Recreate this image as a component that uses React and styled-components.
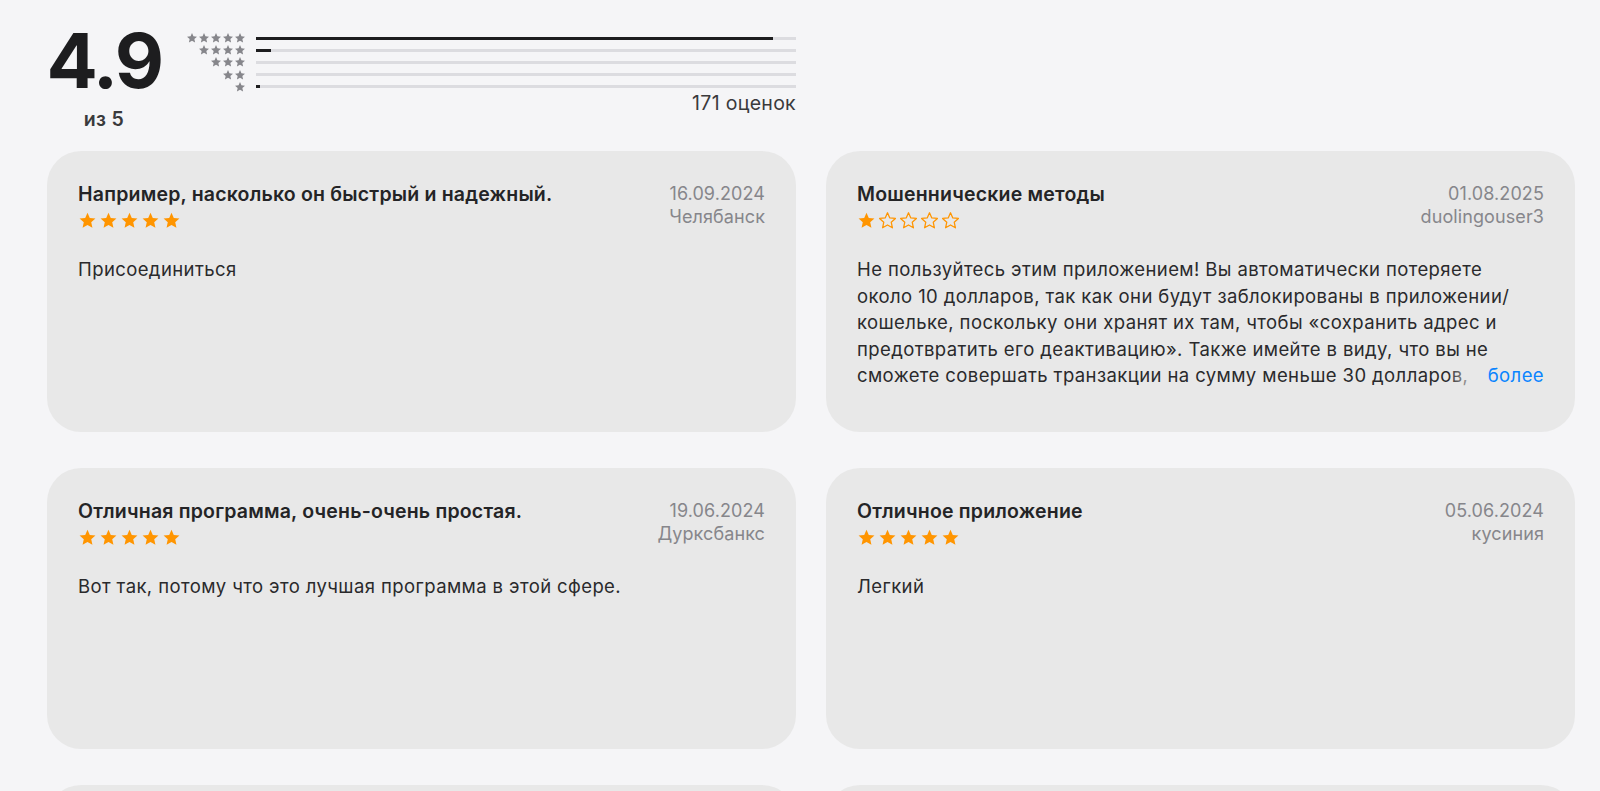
import React from "react";
import styled, { createGlobalStyle } from "styled-components";

const GlobalStyle = createGlobalStyle`
  body {
    margin: 0;
    background: #f5f5f7;
    font-family: Inter, "Noto Sans", "Liberation Sans", sans-serif;
    color: #1d1d1f;
    -webkit-font-smoothing: antialiased;
  }
`;

const Page = styled.div`
  padding: 22px 26px 0 47px;
  overflow: hidden;
  height: 791px;
  box-sizing: border-box;
`;

const Summary = styled.div`
  display: flex;
  align-items: flex-start;
  width: 749px;
`;

const ScoreBox = styled.div`
  display: flex;
  flex-direction: column;
  align-items: center;
  width: 114px;
`;

const Score = styled.div`
  font-size: 76px;
  line-height: 76px;
  font-weight: 700;
  letter-spacing: -2.5px;
  color: #1d1d1f;
`;

const OutOf = styled.div`
  margin-top: 9px;
  font-size: 19.5px;
  font-weight: 600;
  letter-spacing: 0.3px;
  color: #3a3a3c;
`;

const Distribution = styled.div`
  margin-left: 25px;
  margin-top: 10px;
  flex: 1;
  display: flex;
  flex-direction: column;
`;

const DistRow = styled.div`
  display: flex;
  align-items: center;
  height: 12.2px;
`;

const MiniStars = styled.div`
  width: 60px;
  display: flex;
  justify-content: flex-end;
`;

const Track = styled.div`
  margin-left: 10px;
  flex: 1;
  height: 3px;
  background: #dcdce0;
`;

const Fill = styled.div`
  height: 3px;
  background: #1d1d1f;
`;

const Count = styled.div`
  margin-top: -2px;
  text-align: right;
  font-size: 19.5px;
  letter-spacing: 0.3px;
  color: #3a3a3c;
`;

const Grid = styled.div`
  margin-top: 20px;
  display: grid;
  grid-template-columns: 749px 749px;
  column-gap: 30px;
  row-gap: 36px;
`;

const Card = styled.div`
  background: #e8e8e8;
  border-radius: 34px;
  height: 281px;
  padding: 32px 31px 0 31px;
  box-sizing: border-box;
`;

const CardHead = styled.div`
  display: flex;
  justify-content: space-between;
  align-items: flex-start;
`;

const HeadMain = styled.div`
  display: flex;
  flex-direction: column;
`;

const Title = styled.div`
  font-size: 19.5px;
  font-weight: 600;
  letter-spacing: 0.2px;
  line-height: 22px;
  color: #242426;
`;

const Meta = styled.div`
  text-align: right;
  font-size: 18px;
  letter-spacing: 0.1px;
  line-height: 22.5px;
  color: #86868b;
`;

const Stars = styled.div`
  display: flex;
  gap: 2px;
  margin-top: 6px;
`;

const Body = styled.div`
  position: relative;
  margin-top: 26px;
  padding-right: 10px;
  font-size: 18.5px;
  letter-spacing: 0.4px;
  line-height: 26.5px;
  color: #2a2a2c;
  max-height: 132.5px;
  overflow: hidden;
`;

const More = styled.span`
  position: absolute;
  right: 0;
  bottom: 0;
  line-height: 26.5px;
  padding-left: 40px;
  color: #0a84ff;
  background: linear-gradient(to right, rgba(232, 232, 232, 0), #e8e8e8 32px);
`;

const STAR = "M12 2.2l2.9 6.5 7.1.7-5.3 4.8 1.5 7-6.2-3.6-6.2 3.6 1.5-7L2 9.4l7.1-.7z";

function Star({ size, filled, color }) {
  return (
    <svg width={size} height={size} viewBox="0 0 24 24">
      <path
        d={STAR}
        fill={filled ? color : "none"}
        stroke={color}
        strokeWidth={filled ? 0 : 1.6}
        strokeLinejoin="round"
      />
    </svg>
  );
}

function RatingStars({ value }) {
  return (
    <Stars>
      {[1, 2, 3, 4, 5].map((i) => (
        <Star key={i} size={19} filled={i <= value} color="#ff9500" />
      ))}
    </Stars>
  );
}

const dist = [
  { stars: 5, pct: 95.8 },
  { stars: 4, pct: 2.8 },
  { stars: 3, pct: 0 },
  { stars: 2, pct: 0 },
  { stars: 1, pct: 0.8 },
];

const reviews = [
  {
    title: "Например, насколько он быстрый и надежный.",
    date: "16.09.2024",
    author: "Челябанск",
    rating: 5,
    text: "Присоединиться",
  },
  {
    title: "Мошеннические методы",
    date: "01.08.2025",
    author: "duolingouser3",
    rating: 1,
    text: (
      <>
        Не пользуйтесь этим приложением! Вы автоматически потеряете около 10
        долларов, так как они будут заблокированы в приложении/
        <wbr />
        кошельке, поскольку они хранят их там, чтобы «сохранить адрес и
        предотвратить его деактивацию». Также имейте в виду, что вы не сможете
        совершать транзакции на сумму меньше 30 долларов, поскольку
        минимальная сумма перевода слишком высокая.
      </>
    ),
    more: true,
  },
  {
    title: "Отличная программа, очень-очень простая.",
    date: "19.06.2024",
    author: "Дурксбанкс",
    rating: 5,
    text: "Вот так, потому что это лучшая программа в этой сфере.",
  },
  {
    title: "Отличное приложение",
    date: "05.06.2024",
    author: "кусиния",
    rating: 5,
    text: "Легкий",
  },
  {
    title: "Удобно и быстро",
    date: "02.06.2024",
    author: "Алексей",
    rating: 5,
    text: "Пользуюсь каждый день.",
  },
  {
    title: "Хорошее приложение",
    date: "28.05.2024",
    author: "maria_k",
    rating: 4,
    text: "Всё работает.",
  },
];

export default function App() {
  return (
    <>
      <GlobalStyle />
      <Page>
        <Summary>
          <ScoreBox>
            <Score>4.9</Score>
            <OutOf>из 5</OutOf>
          </ScoreBox>
          <Distribution>
            {dist.map((d) => (
              <DistRow key={d.stars}>
                <MiniStars>
                  {Array.from({ length: d.stars }).map((_, i) => (
                    <Star key={i} size={12} filled color="#86868b" />
                  ))}
                </MiniStars>
                <Track>
                  <Fill style={{ width: `${d.pct}%` }} />
                </Track>
              </DistRow>
            ))}
            <Count>171 оценок</Count>
          </Distribution>
        </Summary>
        <Grid>
          {reviews.map((r, i) => (
            <Card key={i}>
              <CardHead>
                <HeadMain>
                  <Title>{r.title}</Title>
                  <RatingStars value={r.rating} />
                </HeadMain>
                <Meta>
                  {r.date}
                  <br />
                  {r.author}
                </Meta>
              </CardHead>
              <Body>
                {r.text}
                {r.more && <More>более</More>}
              </Body>
            </Card>
          ))}
        </Grid>
      </Page>
    </>
  );
}
